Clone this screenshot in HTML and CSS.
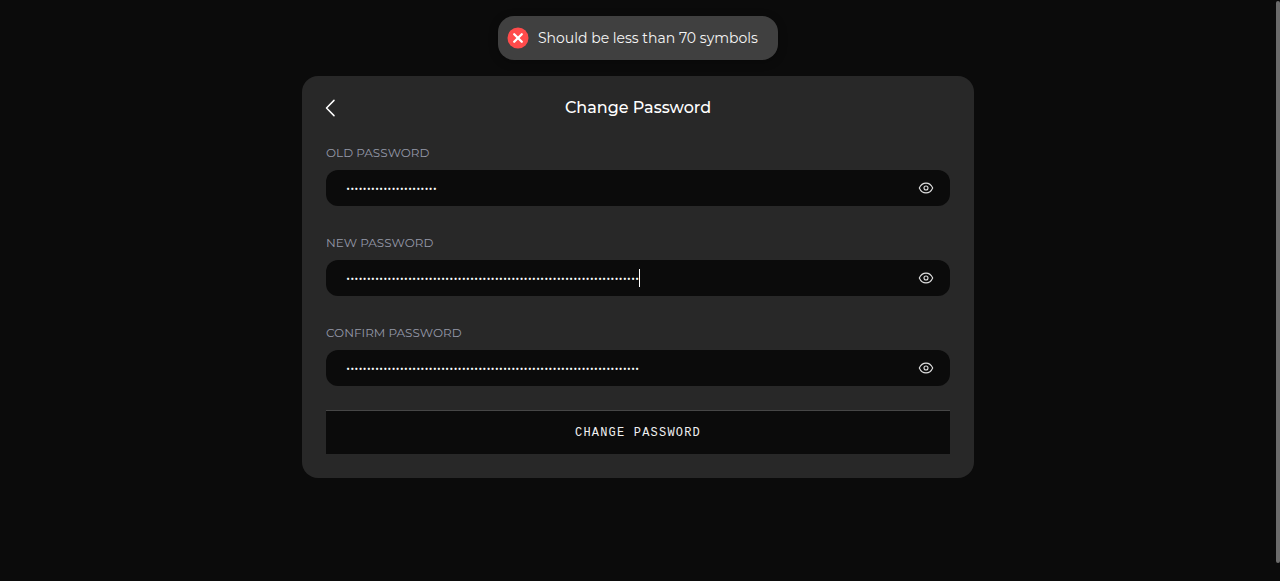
FILE: index.html
```html
<!DOCTYPE html>
<html lang="en">
<head>
<meta charset="utf-8">
<title>Change Password</title>
<link rel="stylesheet" href="styles.css">
</head>
<body>
<div class="toast" role="alert">
  <svg class="toast-icon" width="22" height="22" viewBox="0 0 22 22"><circle cx="11" cy="11" r="10.5" fill="#ff4b4b"/><path d="M7.2 7.2l7.6 7.6M14.8 7.2l-7.6 7.6" stroke="#fff" stroke-width="2.3" stroke-linecap="round"/></svg>
  <span class="toast-text">Should be less than 70 symbols</span>
</div>
<main class="card">
  <header class="card-header">
    <svg class="back" width="12" height="18" viewBox="0 0 12 18"><path d="M9 1.400L1.500 9L9 16.600" fill="none" stroke="#fff" stroke-width="1.5" stroke-linecap="round" stroke-linejoin="round"/></svg>
    <h1 class="title">Change Password</h1>
  </header>
  <form class="form">
    <label class="field">
      <span class="label">OLD PASSWORD</span>
      <span class="control">
        <input class="input" type="password" value="1234567890123456789012">
        <svg class="eye" width="16" height="16" viewBox="0 0 16 16"><path d="M1.300 8C2.800 4.600 5.200 3.100 8 3.100S13.200 4.600 14.700 8C13.200 11.400 10.800 12.900 8 12.900S2.800 11.400 1.300 8Z"/><circle cx="8" cy="8" r="2"/></svg>
      </span>
    </label>
    <label class="field">
      <span class="label">NEW PASSWORD</span>
      <span class="control">
        <input class="input" type="password" value="12345678901234567890123456789012345678901234567890123456789012345678901">
        <span class="caret"></span>
        <svg class="eye" width="16" height="16" viewBox="0 0 16 16"><path d="M1.300 8C2.800 4.600 5.200 3.100 8 3.100S13.200 4.600 14.700 8C13.200 11.400 10.800 12.900 8 12.900S2.800 11.400 1.300 8Z"/><circle cx="8" cy="8" r="2"/></svg>
      </span>
    </label>
    <label class="field">
      <span class="label">CONFIRM PASSWORD</span>
      <span class="control">
        <input class="input" type="password" value="12345678901234567890123456789012345678901234567890123456789012345678901">
        <svg class="eye" width="16" height="16" viewBox="0 0 16 16"><path d="M1.300 8C2.800 4.600 5.200 3.100 8 3.100S13.200 4.600 14.700 8C13.200 11.400 10.800 12.900 8 12.900S2.800 11.400 1.300 8Z"/><circle cx="8" cy="8" r="2"/></svg>
      </span>
    </label>
    <button class="submit" type="button">CHANGE PASSWORD</button>
  </form>
</main>
<div class="scroll-thumb"></div>
</body>
</html>
```
FILE: styles.css
```css
* { box-sizing: border-box; }
body {
  margin: 0;
  height: 581px;
  padding: 16px 4px 0 0;
  overflow: hidden;
  display: flex;
  flex-direction: column;
  align-items: center;
  gap: 16px;
  background: #0b0b0b;
  color: #fff;
  font-family: Montserrat, Inter, sans-serif;
}
.toast {
  width: 280px;
  height: 44px;
  flex: none;
  padding-left: 9px;
  display: flex;
  align-items: center;
  gap: 9px;
  border-radius: 16px;
  background: #404040;
  box-shadow: 0 2px 10px rgba(0, 0, 0, .3);
}
.toast-icon { flex: none; }
.toast-text { font-size: 14px; white-space: nowrap; color: #f5f5f5; font-weight: 400; }
.card {
  width: 672px;
  height: 402px;
  flex: none;
  padding: 20px 24px 24px;
  border-radius: 16px;
  background: #282828;
}
.card-header { display: grid; grid-template-columns: 12px 1fr 12px; align-items: center; height: 24px; }
.back { display: block; margin-left: -1px; }
.title { margin: 0; text-align: center; font-size: 16px; line-height: 22px; font-weight: 500; }
.form { display: flex; flex-direction: column; gap: 28px; margin-top: 24px; }
.field { display: flex; flex-direction: column; gap: 8px; }
.label { font-size: 12px; line-height: 18px; font-weight: 400; color: #9599a8; white-space: nowrap; }
.control {
  position: relative;
  display: flex;
  align-items: center;
  height: 36px;
  padding: 0 16px 0 20px;
  border-radius: 12px;
  background: #0b0b0b;
}
.input {
  flex: 1;
  min-width: 0;
  height: 36px;
  padding: 0;
  border: 0;
  outline: 0;
  background: transparent;
  color: #fff;
  font: 14px Montserrat, Inter, sans-serif;
}
.eye { flex: none; fill: none; stroke: #dedede; stroke-width: 1.1; }
.caret { position: absolute; left: 313px; top: 9px; width: 1px; height: 18px; background: #fff; }
.submit {
  height: 44px;
  margin-top: -4px;
  padding: 0;
  border: 0;
  border-top: 1px solid #464646;
  border-radius: 0;
  background: #0b0b0b;
  color: #f0f0f0;
  font: 12px "Liberation Mono", monospace;
  letter-spacing: 1.2px;
}
.scroll-thumb { position: absolute; right: 0; top: 1px; width: 4px; height: 562px; border-radius: 2px; background: #6b6b6b; }
```
